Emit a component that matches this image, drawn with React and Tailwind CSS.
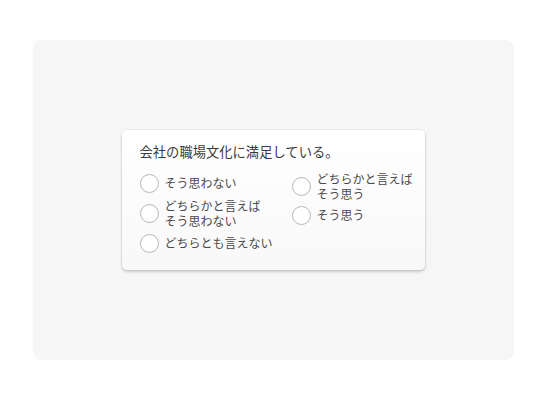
import React from "react";

function Radio() {
  return (
    <span className="block w-[19px] h-[19px] shrink-0 rounded-full border border-[#b8b8b8] bg-white" />
  );
}

function Option({ lines }) {
  return (
    <div className="flex items-center gap-[6px]">
      <Radio />
      <span className="text-[12px] leading-[14.5px] text-[#4a4a4a]">
        {lines.map((l, i) => (
          <React.Fragment key={i}>
            {i > 0 && <br />}
            {l}
          </React.Fragment>
        ))}
      </span>
    </div>
  );
}

export default function App() {
  return (
    <div
      className="w-[546px] h-[400px] bg-white flex items-center justify-center"
      style={{ fontFamily: '"Noto Sans CJK JP", "Noto Sans", sans-serif' }}
    >
      <div className="w-[481px] h-[320px] rounded-lg bg-[#f6f6f6] flex items-center justify-center">
        <div className="w-[303px] h-[140px] rounded-[5px] bg-gradient-to-b from-white to-[#f8f8f8] shadow-[0_0_0_1px_rgba(0,0,0,0.04),0_2px_3px_rgba(0,0,0,0.18)] pl-[18px] pt-[12px]">
          <div className="text-[13.3px] leading-[20px] text-[#3a3a3a]">
            会社の職場文化に満足している。
          </div>
          <div className="flex">
            <div className="w-[152px] flex flex-col gap-[6px] pt-[12px]">
              <Option lines={["そう思わない"]} />
              <Option lines={["どちらかと言えば", "そう思わない"]} />
              <Option lines={["どちらとも言えない"]} />
            </div>
            <div className="flex flex-col gap-[5px] pt-[10px]">
              <Option lines={["どちらかと言えば", "そう思う"]} />
              <Option lines={["そう思う"]} />
            </div>
          </div>
        </div>
      </div>
    </div>
  );
}
